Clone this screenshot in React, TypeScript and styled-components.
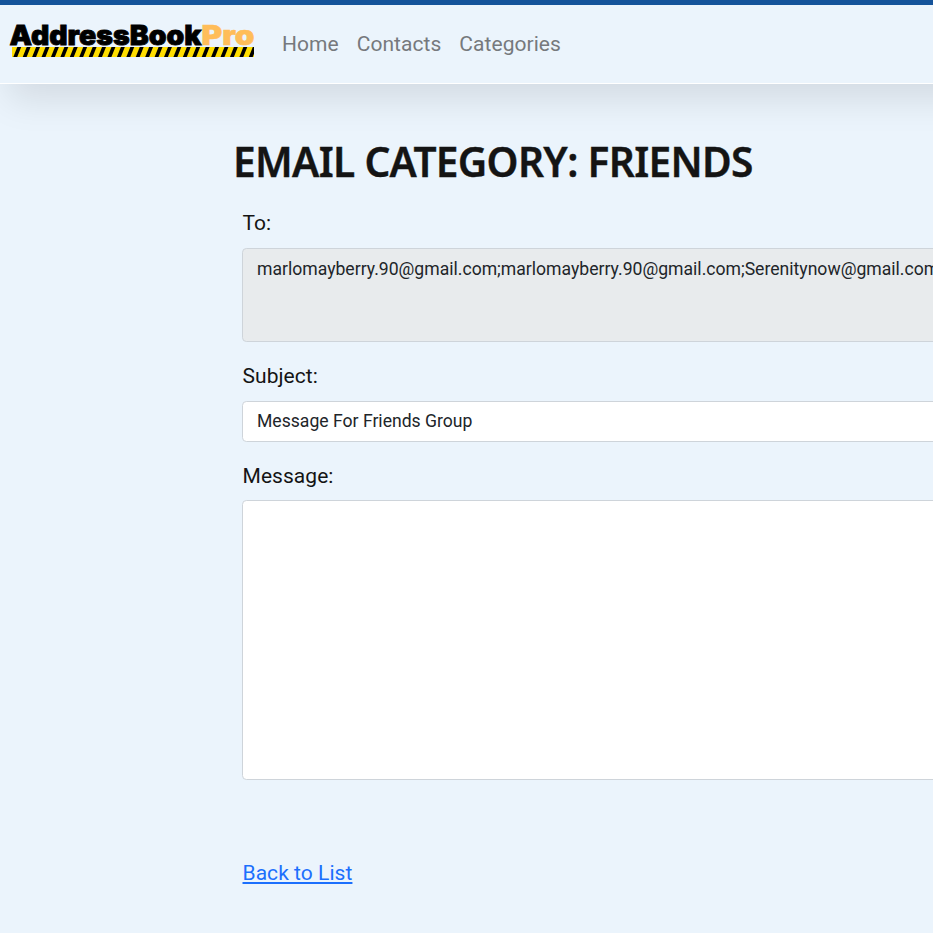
import React from "react";
import styled, { createGlobalStyle } from "styled-components";

const GlobalStyle = createGlobalStyle`
  *, *::before, *::after { box-sizing: border-box; }
  html, body { margin: 0; height: 100%; overflow: hidden; }
  body {
    background: #ebf4fc;
    color: #141414;
    font-family: Roboto, "Liberation Sans", sans-serif;
    font-size: 21px;
    font-weight: 370;
    line-height: 30px;
    letter-spacing: 0.05px;
  }
`;

const Page = styled.div`
  height: 933px;
  overflow: hidden;
`;

const Header = styled.header`
  display: flex;
  align-items: flex-start;
  width: 1100px;
  height: 84px;
  border-top: 5px solid #14539a;
  border-bottom: 1px solid #fff;
  background: #ebf4fc;
  box-shadow: 0 24px 36px -8px rgba(0, 0, 0, 0.1);
`;

const Brand = styled.a`
  display: block;
  width: 264px;
  height: 60px;
`;

const Nav = styled.nav`
  display: flex;
  gap: 18px;
  padding: 24px 0 0 18px;
`;

const NavLink = styled.a`
  color: #76797d;
`;

const Main = styled.main`
  width: 1050px;
  padding: 51px 0 0 235px;
`;

const Title = styled.h1`
  margin: 0 0 0 -2px;
  font-family: "Noto Sans", "Open Sans", sans-serif;
  font-size: 42px;
  line-height: 52px;
  font-weight: 600;
  letter-spacing: -0.7px;
  white-space: nowrap;
  transform: scaleX(0.967);
  transform-origin: left;
  -webkit-text-stroke: 0.4px #141414;
`;

const Form = styled.form`
  display: flex;
  flex-direction: column;
  padding: 21px 0 0 7px;
`;

const Label = styled.label`
  height: 30px;
  padding-left: 0.5px;
  margin-bottom: 10px;
`;

const Field = styled.div<{ $height: number; $gap: number; $disabled?: boolean }>`
  height: ${(p) => p.$height}px;
  margin-bottom: ${(p) => p.$gap}px;
  padding: ${(p) => (p.$disabled ? 7 : 6)}px 14px;
  border: 1px solid #ced4da;
  border-radius: 4.4px;
  background: ${(p) => (p.$disabled ? "#e8ebed" : "#fff")};
  color: #212529;
  font-size: 17.6px;
  font-weight: 400;
  line-height: 26.4px;
  letter-spacing: 0;
  white-space: nowrap;
`;

const MessageLabel = styled(Label)`
  margin-bottom: 9px;
`;

const BackLink = styled.a`
  align-self: flex-start;
  margin-left: 0.5px;
  color: #1b6ffd;
  text-decoration: underline;
`;

const stripes = Array.from({ length: 27 }, (_, i) => 13.3 + i * 9.42);

function Logo() {
  return (
    <svg width="264" height="60" viewBox="0 5 264 60" role="img" aria-label="AddressBookPro">
      <defs>
        <clipPath id="band">
          <rect x="12" y="47" width="242" height="10" />
        </clipPath>
      </defs>
      <text x="9.5" y="45" fontFamily="Inter" fontWeight="900" fontSize="27" letterSpacing="0" textLength="192" lengthAdjust="spacingAndGlyphs" stroke="#000" strokeWidth="0.8">
        AddressBook
      </text>
      <text x="201.5" y="45" fontFamily="Inter" fontWeight="900" fontSize="27" letterSpacing="0" textLength="53" lengthAdjust="spacingAndGlyphs" fill="#ffbd59" stroke="#ffbd59" strokeWidth="0.6">
        Pro
      </text>
      <g clipPath="url(#band)">
        <rect x="12" y="47" width="242" height="10" fill="#ffde00" />
        {stripes.map((x) => (
          <path key={x} d={`M${x} 57l4-10h3.9l-4 10z`} />
        ))}
      </g>
    </svg>
  );
}

export default function App() {
  return (
    <Page>
      <GlobalStyle />
      <Header>
        <Brand><Logo /></Brand>
        <Nav>
          <NavLink>Home</NavLink>
          <NavLink>Contacts</NavLink>
          <NavLink>Categories</NavLink>
        </Nav>
      </Header>
      <Main>
        <Title>EMAIL CATEGORY: FRIENDS</Title>
        <Form>
          <Label>To:</Label>
          <Field $height={94} $gap={19} $disabled>
            marlomayberry.90@gmail.com;marlomayberry.90@gmail.com;Serenitynow@gmail.com
          </Field>
          <Label>Subject:</Label>
          <Field $height={41} $gap={19}>Message For Friends Group</Field>
          <MessageLabel>Message:</MessageLabel>
          <Field $height={280} $gap={78} />
          <BackLink>Back to List</BackLink>
        </Form>
      </Main>
    </Page>
  );
}
